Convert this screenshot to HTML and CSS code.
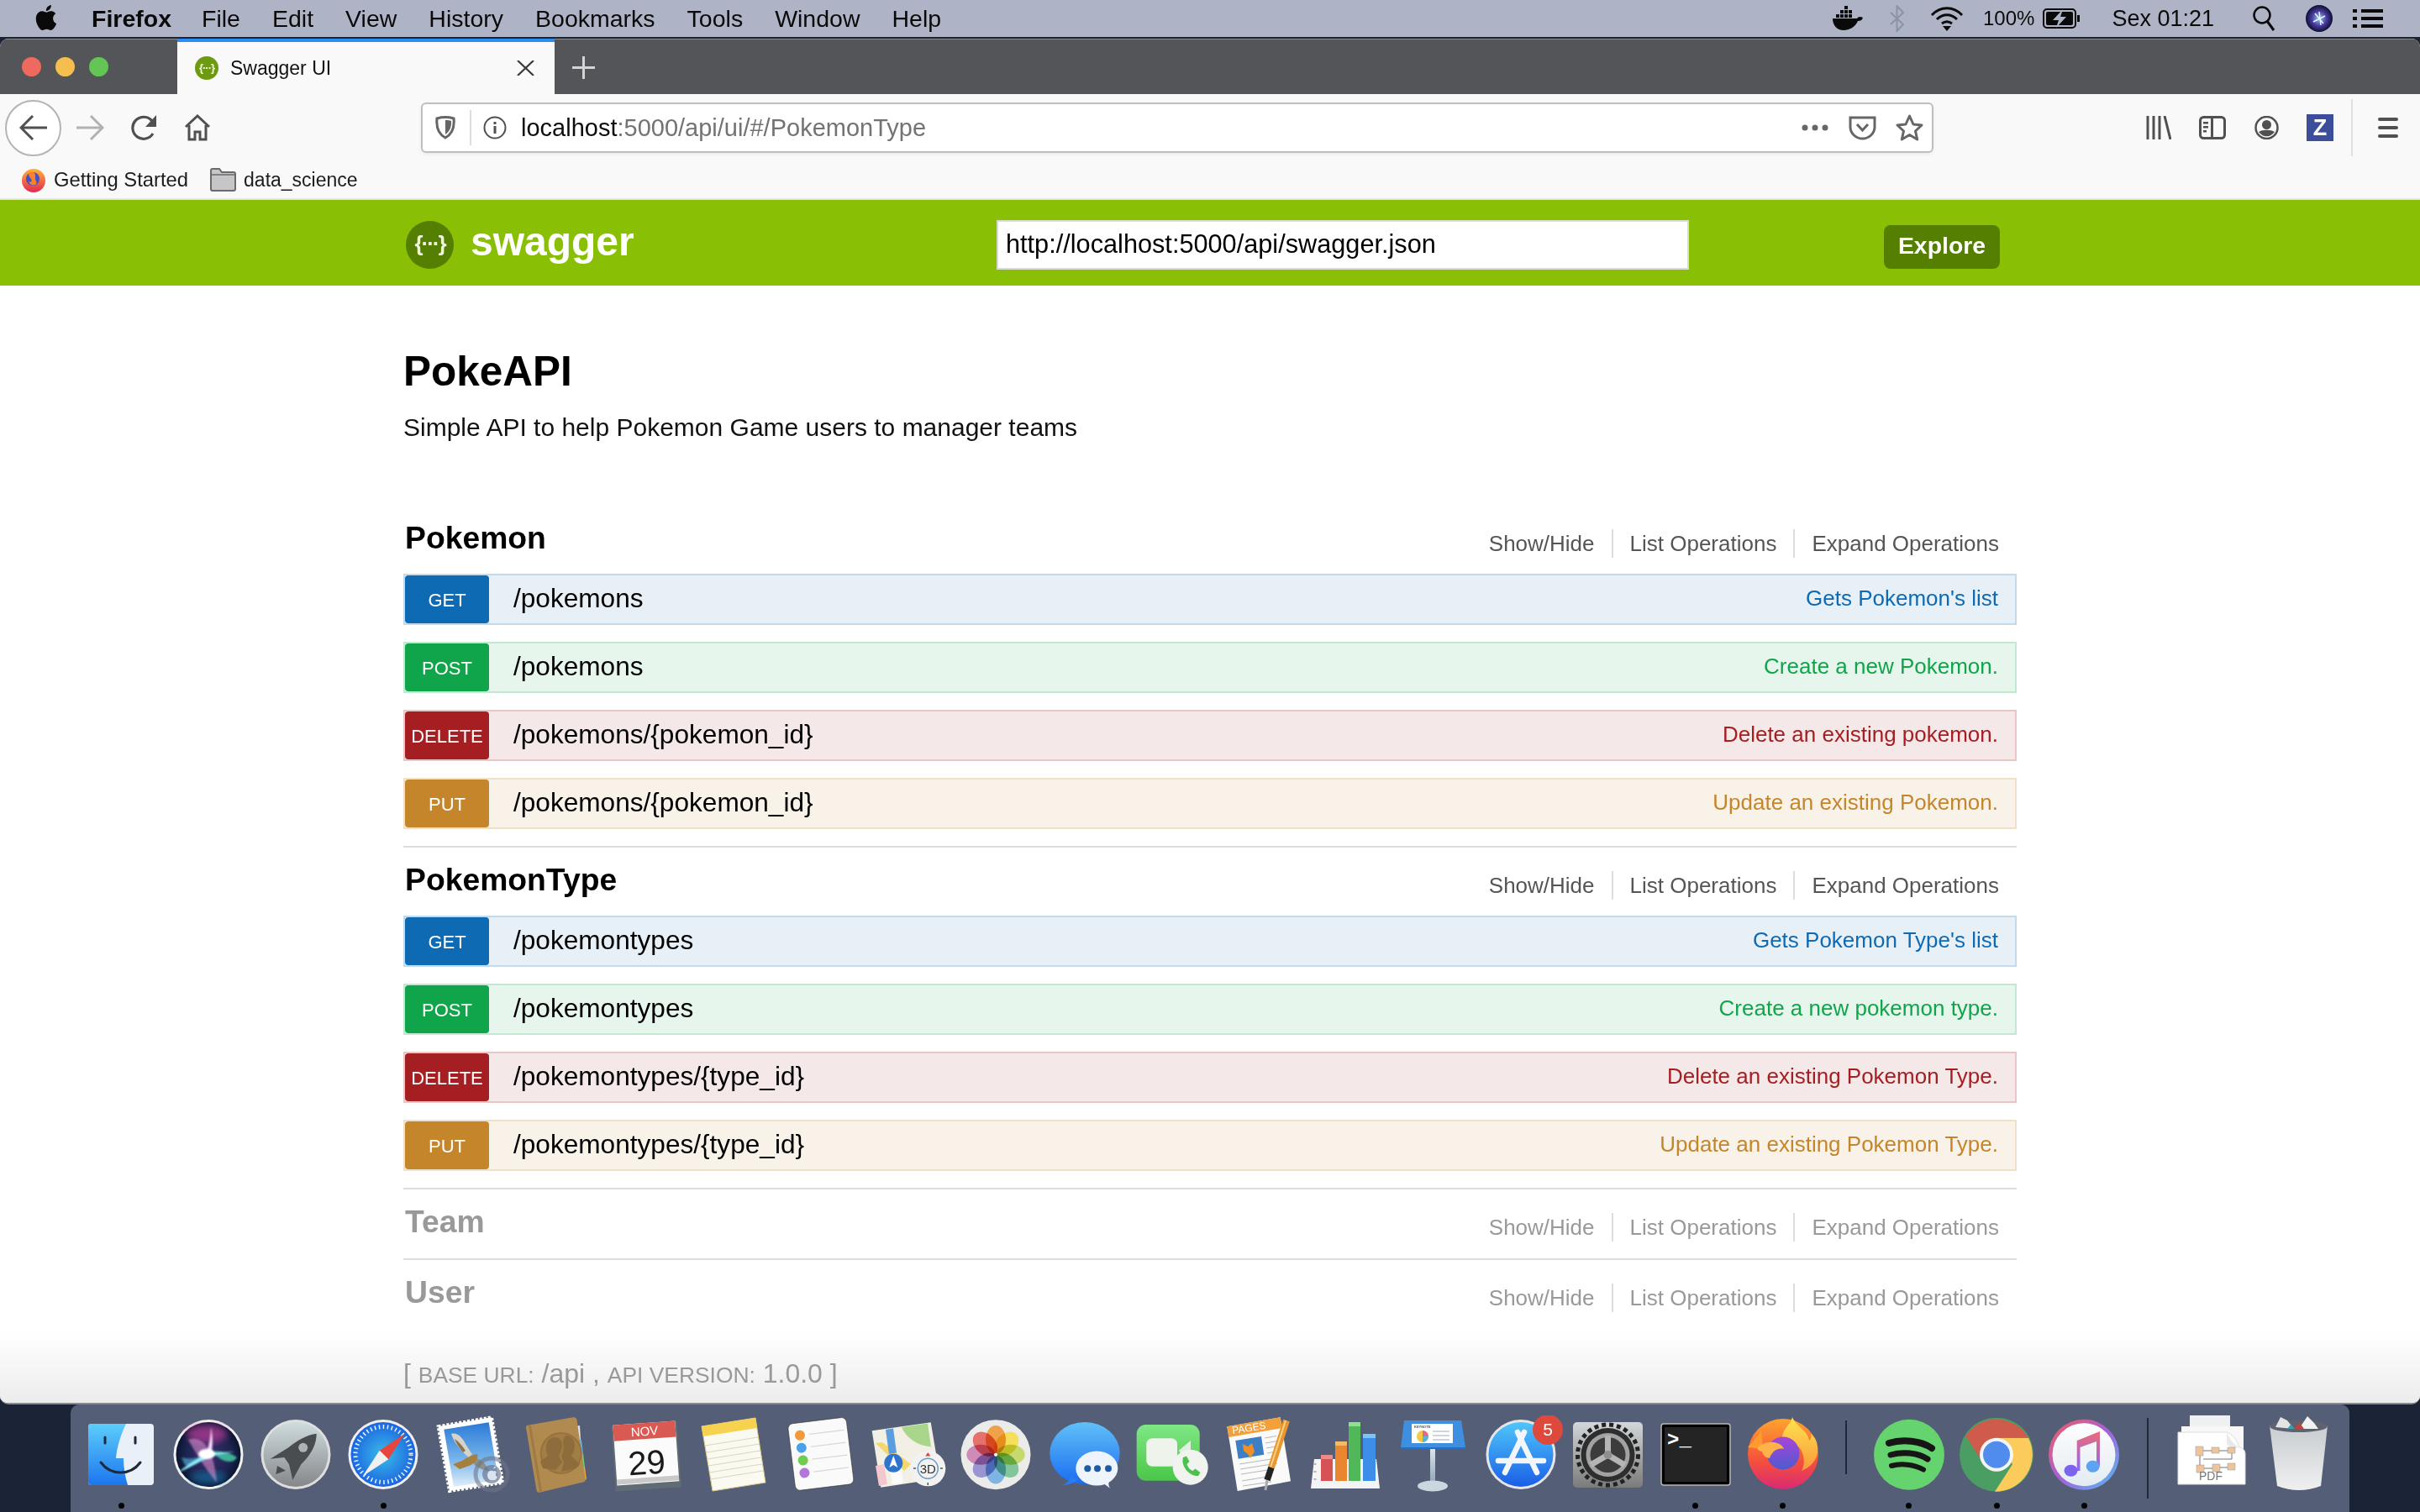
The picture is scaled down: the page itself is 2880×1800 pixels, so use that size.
FILE: index.html
```html
<!DOCTYPE html>
<html lang="en">
<head>
<meta charset="utf-8">
<title>Swagger UI</title>
<link rel="stylesheet" href="styles.css">
</head>
<body>
<header class="menubar">
  <svg class="apple" width="36" height="36" viewBox="0 0 24 24"><path fill="#0a0a0a" d="M18.71 19.5c-.83 1.24-1.71 2.45-3.05 2.47-1.34.03-1.77-.79-3.29-.79-1.53 0-2 .77-3.27.82-1.31.05-2.3-1.32-3.14-2.53C4.25 17 2.94 12.45 4.7 9.39c.87-1.52 2.43-2.48 4.12-2.51 1.28-.02 2.5.87 3.29.87.78 0 2.26-1.07 3.81-.91.65.03 2.47.26 3.64 1.98-.09.06-2.17 1.28-2.15 3.81.03 3.02 2.65 4.03 2.68 4.04-.03.07-.42 1.44-1.38 2.83M13 3.5c.73-.83 1.94-1.46 2.94-1.5.13 1.17-.34 2.35-1.04 3.19-.69.85-1.83 1.51-2.95 1.42-.15-1.15.41-2.35 1.05-3.11z"/></svg>
  <nav class="menus">
    <span class="menu-app">Firefox</span><span>File</span><span>Edit</span><span>View</span><span>History</span><span>Bookmarks</span><span>Tools</span><span>Window</span><span>Help</span>
  </nav>
  <div class="status">
    <svg width="36" height="30" viewBox="0 0 36 30"><path fill="#0a0a0a" d="M0 15h29c1-2 4-3 7-1-1 3-3 4-6 4-3 7-10 11-17 11C5 29 0 23 0 15z"/><path fill="#0a0a0a" d="M4 10h4v4H4zM9 10h4v4H9zM14 10h4v4h-4zM19 10h4v4h-4zM9 5h4v4H9zM14 5h4v4h-4zM19 5h4v4h-4zM14 0h4v4h-4z"/></svg>
    <svg class="ml32" width="17" height="32" viewBox="0 0 17 32"><path fill="none" stroke="#8b93a6" stroke-width="2" d="M1 9l15 14-7.500 8V1L16 9 1 23"/></svg>
    <svg class="ml31" width="40" height="30" viewBox="0 0 40 30"><g fill="none" stroke="#0a0a0a" stroke-width="3"><path d="M2 11C12 0 28 0 38 11"/><path d="M8 16c7-7 17-7 24 0"/><path d="M14 21c4-3 8-3 12 0"/></g><path fill="#0a0a0a" d="M15 24h10l-5 6z"/></svg>
    <span class="batt-text ml23">100%</span>
    <svg class="ml10" width="44" height="24" viewBox="0 0 44 24"><rect x="1" y="1" width="38" height="22" rx="4" fill="none" stroke="#0a0a0a" stroke-width="2"/><rect x="4" y="4" width="32" height="16" rx="2" fill="#0a0a0a"/><path fill="#aeb4c6" d="M24 1L12 14h7l-3 9 12-13h-7z"/><path fill="#0a0a0a" d="M41 8h3v8h-3z"/></svg>
    <span class="clock ml38">Sex 01:21</span>
    <svg class="ml46" width="27" height="30" viewBox="0 0 27 30"><circle cx="11" cy="11" r="9.500" fill="none" stroke="#0a0a0a" stroke-width="2.500"/><path stroke="#0a0a0a" stroke-width="3" d="M17 18l8 11"/></svg>
    <svg class="ml36" width="32" height="32" viewBox="0 0 32 32"><defs><radialGradient id="sm"><stop offset="0" stop-color="#8fd0ea"/><stop offset=".55" stop-color="#4a3aa0"/><stop offset="1" stop-color="#0a1030"/></radialGradient></defs><circle cx="16" cy="16" r="16" fill="url(#sm)"/><path stroke="#e8f2fa" stroke-width="1.500" d="M16 8l2 16M9 20l14-7M11 10l10 12"/></svg>
    <svg class="ml24" width="36" height="24" viewBox="0 0 36 24"><path fill="#0a0a0a" d="M0 1h5v4H0zM10 1h26v4H10zM0 10h5v4H0zM10 10h26v4H10zM0 19h5v4H0zM10 19h26v4H10z"/></svg>
  </div>
</header>

<div class="window">
  <div class="tabbar">
    <div class="lights"><i class="light red"></i><i class="light yellow"></i><i class="light green"></i></div>
    <div class="tab">
      <span class="favicon">{···}</span>
      <span class="tab-title">Swagger UI</span>
      <svg class="tab-close" width="21" height="18" viewBox="0 0 21 18"><path stroke="#3a3a3a" stroke-width="2.200" d="M1 0l19 18M20 0L1 18"/></svg>
    </div>
    <svg class="tab-new" width="27" height="27" viewBox="0 0 27 27"><path stroke="#d4d4d4" stroke-width="3" d="M13.500 0v27M0 13.500h27"/></svg>
  </div>

  <div class="toolbar">
    <div class="backbtn"><svg width="34" height="30" viewBox="0 0 34 30"><path fill="none" stroke="#505050" stroke-width="3" d="M33 15H3M16 1L2 15l14 14"/></svg></div>
    <div class="navbtn"><svg width="33" height="30" viewBox="0 0 33 30"><path fill="none" stroke="#b2b2b2" stroke-width="3" d="M0 15h31M17 1l14 14-14 14"/></svg></div>
    <div class="navbtn"><svg width="31" height="30" viewBox="0 0 31 30"><path fill="none" stroke="#505050" stroke-width="3.200" d="M26 22A13 13 0 1 1 24 6l4 4"/><path fill="#505050" d="M30 0v14H17z"/></svg></div>
    <div class="navbtn"><svg width="32" height="32" viewBox="0 0 32 32"><path fill="none" stroke="#505050" stroke-width="3" d="M2 15L16 2l14 13M6 13v17h7v-9h6v9h7V13"/></svg></div>
    <div class="urlbar">
      <svg width="24" height="28" viewBox="0 0 24 28"><path fill="none" stroke="#666" stroke-width="3" d="M2 3c7-2 13-2 20 0 1 10-1 18-10 23C3 21 1 13 2 3z"/><path fill="#666" d="M12 5c3 0 5 .3 7 1 .5 7-1.500 12-7 16z"/></svg>
      <i class="url-sep"></i>
      <svg class="url-info" width="28" height="28" viewBox="0 0 28 28"><circle cx="14" cy="14" r="12.500" fill="none" stroke="#505050" stroke-width="2"/><path fill="#505050" d="M12.500 12h3v9h-3zM12.500 7h3v3h-3z"/></svg>
      <span class="url-text"><b>localhost</b>:5000/api/ui/#/PokemonType</span>
      <svg class="url-dots" width="32" height="8" viewBox="0 0 32 8"><circle cx="4" cy="4" r="3.500" fill="#666"/><circle cx="16" cy="4" r="3.500" fill="#666"/><circle cx="28" cy="4" r="3.500" fill="#666"/></svg>
      <svg class="url-pocket" width="33" height="29" viewBox="0 0 33 29"><path fill="none" stroke="#666" stroke-width="3" d="M2 2h29v11c0 8-7 14-14.500 14S2 21 2 13z"/><path fill="none" stroke="#666" stroke-width="3" d="M10 10l6.500 7L23 10"/></svg>
      <svg class="url-star" width="33" height="32" viewBox="0 0 33 32"><path fill="none" stroke="#666" stroke-width="3" stroke-linejoin="round" d="M16.500 2l4.500 10 10 1-7.500 7 2.200 10-9.200-5.500L7.300 30l2.200-10L2 13l10-1z"/></svg>
    </div>
    <div class="navbtn tools-first"><svg width="30" height="28" viewBox="0 0 30 28"><path stroke="#505050" stroke-width="3" fill="none" d="M2 0v28M9 0v28M16 0v28M22 0l7 28"/></svg></div>
    <div class="navbtn"><svg width="32" height="28" viewBox="0 0 32 28"><rect x="1.500" y="1.500" width="29" height="25" rx="4" fill="none" stroke="#505050" stroke-width="3"/><path fill="#505050" d="M14 2h3v24h-3zM5 7h6v2.500H5zM5 12h6v2.500H5zM5 17h4v2.500H5z"/></svg></div>
    <div class="navbtn"><svg width="29" height="28" viewBox="0 0 29 28"><circle cx="14.500" cy="14" r="13" fill="none" stroke="#505050" stroke-width="2.500"/><circle cx="14.500" cy="10.500" r="5.500" fill="#505050"/><path fill="#505050" d="M5 19c5-3 14-3 19 0-5 7-14 7-19 0z"/></svg></div>
    <div class="navbtn"><span class="zbox">Z</span></div>
    <i class="tool-sep"></i>
    <div class="navbtn tool-menu"><svg width="24" height="24" viewBox="0 0 24 24"><path stroke="#505050" stroke-width="4" stroke-linecap="round" d="M2 2h20M2 12h20M2 22h20"/></svg></div>
  </div>

  <div class="bookmarks">
    <svg width="30" height="30" viewBox="0 0 30 30"><defs><linearGradient id="fxs" x1="0" y1="0" x2="0" y2="1"><stop offset="0" stop-color="#ffb23a"/><stop offset="1" stop-color="#e22850"/></linearGradient></defs><circle cx="15" cy="16" r="14" fill="url(#fxs)"/><circle cx="14" cy="14" r="8" fill="#4a4fc0"/><path fill="#f8832b" d="M9 7c5-3 9 0 8 5-1 4 3 5 1 8-3 3-8 1-9-3 2 2 5 0 3-3-2-2-3-4-3-7z"/></svg>
    <span class="bm-label">Getting Started</span>
    <svg class="bm-folder" width="31" height="28" viewBox="0 0 31 28"><path fill="#c6c6c8" stroke="#6a6a6a" stroke-width="2" d="M1 3a2 2 0 0 1 2-2h8l3 4h14a2 2 0 0 1 2 2v18a2 2 0 0 1-2 2H3a2 2 0 0 1-2-2z"/><path stroke="#6a6a6a" stroke-width="1.500" d="M1 8h29"/></svg>
    <span class="bm-label bm-narrow">data_science</span>
  </div>

  <div class="swagger-bar">
    <div class="swagger-inner">
      <div class="logo"><span class="logo-mark">{···}</span><span class="logo-word">swagger</span></div>
      <div class="api-input">http://localhost:5000/api/swagger.json</div>
      <div class="explore">Explore</div>
    </div>
  </div>

  <main class="page">
    <div class="content">
      <h1 class="title">PokeAPI</h1>
      <p class="subtitle">Simple API to help Pokemon Game users to manager teams</p>

      <section class="resource open">
        <div class="res-head"><h2>Pokemon</h2><div class="res-actions"><span>Show/Hide</span><span>List Operations</span><span>Expand Operations</span></div></div>
        <div class="ops">
          <div class="op get"><span class="verb">GET</span><span class="path">/pokemons</span><span class="desc">Gets Pokemon's list</span></div>
          <div class="op post"><span class="verb">POST</span><span class="path">/pokemons</span><span class="desc">Create a new Pokemon.</span></div>
          <div class="op delete"><span class="verb">DELETE</span><span class="path">/pokemons/{pokemon_id}</span><span class="desc">Delete an existing pokemon.</span></div>
          <div class="op put"><span class="verb">PUT</span><span class="path">/pokemons/{pokemon_id}</span><span class="desc">Update an existing Pokemon.</span></div>
        </div>
      </section>

      <section class="resource open">
        <div class="res-head"><h2>PokemonType</h2><div class="res-actions"><span>Show/Hide</span><span>List Operations</span><span>Expand Operations</span></div></div>
        <div class="ops">
          <div class="op get"><span class="verb">GET</span><span class="path">/pokemontypes</span><span class="desc">Gets Pokemon Type's list</span></div>
          <div class="op post"><span class="verb">POST</span><span class="path">/pokemontypes</span><span class="desc">Create a new pokemon type.</span></div>
          <div class="op delete"><span class="verb">DELETE</span><span class="path">/pokemontypes/{type_id}</span><span class="desc">Delete an existing Pokemon Type.</span></div>
          <div class="op put"><span class="verb">PUT</span><span class="path">/pokemontypes/{type_id}</span><span class="desc">Update an existing Pokemon Type.</span></div>
        </div>
      </section>

      <section class="resource closed ruled">
        <div class="res-head"><h2>Team</h2><div class="res-actions"><span>Show/Hide</span><span>List Operations</span><span>Expand Operations</span></div></div>
      </section>
      <section class="resource closed">
        <div class="res-head"><h2>User</h2><div class="res-actions"><span>Show/Hide</span><span>List Operations</span><span>Expand Operations</span></div></div>
      </section>

      <p class="api-footer">[ <small>BASE URL:</small> /api , <small>API VERSION:</small> 1.0.0 ]</p>
    </div>
  </main>
</div>

<footer class="dockrow">
  <div class="dock">
    <div class="dock-item"><svg width="104" height="104" viewBox="0 0 104 104"><defs><linearGradient id="fi" x1="0" y1="0" x2="0" y2="1"><stop offset="0" stop-color="#5dcdfb"/><stop offset="1" stop-color="#1c76ee"/></linearGradient></defs><rect x="13" y="10" width="78" height="73" rx="4" fill="#eaf0f7"/><path fill="url(#fi)" d="M17 10h41c-6 12-11 28-12 41h9c0 12 2 22 5 32H17a4 4 0 0 1-4-4V14a4 4 0 0 1 4-4z"/><path stroke="#1d2a3a" stroke-width="3" stroke-linecap="round" d="M33 26v7M69 26v7"/><path fill="none" stroke="#1d2a3a" stroke-width="3" stroke-linecap="round" d="M28 56c12 16 35 16 47 0"/></svg><i class="dot"></i></div>
    <div class="dock-item"><svg width="104" height="104" viewBox="0 0 104 104"><defs><radialGradient id="si"><stop offset="0" stop-color="#3b2f6e"/><stop offset=".7" stop-color="#1c2450"/><stop offset="1" stop-color="#0b1530"/></radialGradient><filter id="blur4"><feGaussianBlur stdDeviation="4"/></filter><filter id="blur1"><feGaussianBlur stdDeviation="1"/></filter></defs><circle cx="52" cy="46.500" r="41.500" fill="#f1f1f1"/><circle cx="52" cy="46.500" r="38.500" fill="url(#si)"/><ellipse cx="50" cy="22" rx="24" ry="11" fill="#b43a96" opacity=".75" filter="url(#blur4)"/><ellipse cx="52" cy="74" rx="22" ry="8" fill="#176a9c" opacity=".7" filter="url(#blur4)"/><g filter="url(#blur1)"><path fill="#d98acb" opacity=".6" d="M28 29c14-5 30 5 34 51-10-12-22-30-34-51z"/><path fill="#45c7a6" opacity=".85" d="M56 43c10-1 22 1 30 7-6 10-20 4-30-7z"/><path fill="#49a7cf" opacity=".7" d="M20 50c10 3 20 1 28-4-4 8-14 14-24 13z"/><path fill="#8ff0fa" d="M16 68c14-12 28-20 38-23l30-2-28 5c-12 6-26 14-40 20z"/><path fill="#f4d9f4" d="M55 14c0 10-2 22-6 32l6 2c3-12 2-24 0-34z"/></g><ellipse cx="50" cy="46" rx="10" ry="6" fill="#fff" filter="url(#blur1)"/></svg></div>
    <div class="dock-item"><svg width="104" height="104" viewBox="0 0 104 104"><defs><linearGradient id="la" x1="0" y1="0" x2="0" y2="1"><stop offset="0" stop-color="#cfdcdf"/><stop offset="1" stop-color="#85878a"/></linearGradient></defs><circle cx="52" cy="46.500" r="41.500" fill="#dedede"/><circle cx="52" cy="46.500" r="38.500" fill="url(#la)"/><path fill="#4a4d50" d="M76.700 21.700C65 23.300 53.300 30 43.300 38.300L21.700 51.700 38.300 50 44 58.300l4.300 18.400 10-18.400C71.700 45 76.700 33.300 76.700 21.700z"/><path fill="#4a4d50" d="M30 60l-1.700 10L40 65.700z"/><circle cx="60.700" cy="38.300" r="5.500" fill="#adb3b5"/></svg></div>
    <div class="dock-item"><svg width="104" height="104" viewBox="0 0 104 104"><defs><radialGradient id="sa"><stop offset="0" stop-color="#3cbce8"/><stop offset="1" stop-color="#1b66e0"/></radialGradient></defs><circle cx="52" cy="46.500" r="41.500" fill="#f0f0f0"/><circle cx="52" cy="46.500" r="38.500" fill="url(#sa)"/><circle cx="52" cy="46.500" r="33" fill="none" stroke="#e6f3fd" stroke-width="5" stroke-dasharray="1.500 3.500"/><path fill="#e9453f" d="M77.700 21.700L47.700 41.700l10.600 10.600z"/><path fill="#f1f1f1" d="M27.700 72.300l20-30.600 10.600 10.600z"/></svg><i class="dot"></i></div>
    <div class="dock-item"><svg width="104" height="104" viewBox="0 0 104 104"><defs><linearGradient id="ma" x1="0" y1="0" x2="0" y2="1"><stop offset="0" stop-color="#2b7ad6"/><stop offset=".55" stop-color="#74b2ea"/><stop offset="1" stop-color="#e0eef9"/></linearGradient></defs><path fill="#fff" stroke="#fff" stroke-width="4" stroke-dasharray="3 2" d="M13.700 13.300L77 2.300 90.300 80 27 90z"/><path fill="#fff" d="M15.700 14.300L75.500 4.300 88.300 78 28.500 88z"/><path fill="url(#ma)" d="M20.300 16.700L73.700 8.300 85.300 76.700 32 85z"/><path fill="#d8d3c6" d="M50 50C42 44 32 32 29 22c7-2 13 4 17 12 4 6 6 10 8 12z"/><path fill="#8d7450" d="M33 28c4 2 9 8 13 14l-3 2c-4-5-8-10-10-16z"/><path fill="#8f8f88" d="M56 52c6-2 12 2 18 14-6 0-14-4-18-8z"/><path fill="#a57f3e" d="M60 46c-4 0-12 4-18 8-6 2-10 4-11 4l8 6 11-4c6-2 12-8 10-14z"/><circle cx="77" cy="70" r="19" fill="none" stroke="#6c7488" stroke-width="5" opacity=".6"/><circle cx="77" cy="70" r="11" fill="#667088" opacity=".65"/><path fill="#dbe3ee" d="M79 63c1-2 3-2.500 3-2.500 0 2-1 3.500-3 2.500zm4 5c-2 1-1 5 1 5-1 3-3 5-6 4-3 1-6-2-6-6s3-6 6-5c2 1 3-1 5 2z"/></svg></div>
    <div class="dock-item"><svg width="104" height="104" viewBox="0 0 104 104"><path fill="#dfe3e6" d="M72 13l6-1 1 17-5 1z"/><path fill="#64b4e4" d="M74 30l6-1 2 17-6 1z"/><path fill="#6fce7b" d="M76 46l6-1 2 17-6 1z"/><path fill="#eda838" d="M78 62l6-1 2 15-6 2z"/><path fill="#b18a4f" d="M16 11.700L70 2.300q4-.5 4.500 3L84.700 76q.3 3-3 3.500L30 91.700q-3 .5-3.500-2.500L14 14.500q-.3-2.500 2-2.800z"/><path fill="#9f7a44" d="M17 12l3 0 13 78-3 1z"/><circle cx="55.700" cy="45" r="24" fill="#a37d46" stroke="#96723e" stroke-width="2"/><path fill="#8f6c3b" d="M47 26c7-1 11 5 10 12-1 5-3 8-4 10l4 8-8 9-15-2-3-8 9-7c-2-4-2-7-2-10 0-6 3-11 9-12zM62 24c6 0 10 5 10 12 0 5-2 9-4 12l10 10-4 5-18 4 3-11-3-8c3-5 3-11 2-15 0-4 1-8 4-9z"/></svg></div>
    <div class="dock-item"><svg width="104" height="104" viewBox="0 0 104 104"><g transform="rotate(-4 52 47)"><rect x="13" y="10" width="78" height="78" fill="#5f6c73"/><rect x="15" y="9" width="74" height="72" fill="#fbfbfb"/><rect x="15" y="9" width="74" height="19" fill="#d95a52"/><rect x="15" y="74" width="74" height="6" fill="#c9c9c9"/><text class="dk-nov" x="52" y="24">NOV</text><text class="dk-day" x="52" y="70">29</text></g></svg></div>
    <div class="dock-item"><svg width="104" height="104" viewBox="0 0 104 104"><path fill="#fbfaf0" stroke="#d9c988" d="M14 13L78 3l12 77-63 10z"/><path fill="#f7d24e" d="M14 13L78 3l2 12-64 10z"/><g stroke="#d9d6c2" stroke-width="1.200"><path d="M18 36l63-10M20 44l63-10M21 52l63-10M22 60l63-10M23 68l63-10M24 76l63-10"/></g></svg></div>
    <div class="dock-item"><svg width="104" height="104" viewBox="0 0 104 104"><g transform="translate(3 0) rotate(-7 48 47)"><rect x="14" y="6" width="70" height="80" rx="6" fill="#fafafa" stroke="#333" stroke-width=".6"/><circle cx="27" cy="21" r="6" fill="#f2993a"/><circle cx="27" cy="36" r="6" fill="#4aa1ea"/><circle cx="27" cy="51" r="6" fill="#6fce4f"/><circle cx="27" cy="66" r="6" fill="#b376d9"/><path stroke="#d8d8d8" stroke-width="1.200" d="M38 21h42M38 36h42M38 51h42M38 66h42"/></g></svg></div>
    <div class="dock-item"><svg width="104" height="104" viewBox="0 0 104 104"><path fill="#f2efe4" d="M8.700 18.300L78.700 8.300 90 75 19.300 85.700z"/><path fill="#a9d68a" d="M44 14l31-4.500 4 28C62 36 50 27 44 14z"/><path fill="#f6d76b" d="M13 33l8-1 34 26-8 8z"/><path fill="#5b9ee0" d="M25 17l9-1.500 4 29-9 1.500z"/><path fill="#f4c7cf" d="M13 60l10-2 4 24-10 2z"/><path fill="#fbfbfb" d="M30 62l13-2 3 20-13 2z"/><circle cx="34.300" cy="56.700" r="11" fill="#2c74d0"/><path fill="#fff" d="M34.300 48l5 14-5-3-5 3z"/><circle cx="75.300" cy="63.300" r="21" fill="#f2f2f2"/><circle cx="75.300" cy="63.300" r="12" fill="none" stroke="#6a9cc4" stroke-width="1.500"/><path fill="#d24b3e" d="M75.300 44l3 4.500h-6z"/><path stroke="#555" stroke-width="1.500" d="M58 63h3M90 63h3M75.300 80v3"/><text class="dk-3d" x="75.300" y="68.500">3D</text></svg></div>
    <div class="dock-item"><svg width="104" height="104" viewBox="0 0 104 104"><circle cx="52" cy="46.700" r="41.500" fill="#ebebe9"/><g class="petals"><ellipse cx="52" cy="29" rx="12" ry="17" fill="#efa24a"/><ellipse cx="52" cy="29" rx="12" ry="17" fill="#f6df5a" transform="rotate(45 52 46.700)"/><ellipse cx="52" cy="29" rx="12" ry="17" fill="#c6d96c" transform="rotate(90 52 46.700)"/><ellipse cx="52" cy="29" rx="12" ry="17" fill="#83c59b" transform="rotate(135 52 46.700)"/><ellipse cx="52" cy="29" rx="12" ry="17" fill="#7eb4e2" transform="rotate(180 52 46.700)"/><ellipse cx="52" cy="29" rx="12" ry="17" fill="#9a94d0" transform="rotate(225 52 46.700)"/><ellipse cx="52" cy="29" rx="12" ry="17" fill="#cf8bb8" transform="rotate(270 52 46.700)"/><ellipse cx="52" cy="29" rx="12" ry="17" fill="#e5716a" transform="rotate(315 52 46.700)"/></g><circle cx="52" cy="46.700" r="2" fill="#fff"/></svg></div>
    <div class="dock-item"><svg width="104" height="104" viewBox="0 0 104 104"><defs><linearGradient id="ms" x1="0" y1="0" x2="0" y2="1"><stop offset="0" stop-color="#62c0f8"/><stop offset="1" stop-color="#1a6cf0"/></linearGradient></defs><ellipse cx="54" cy="45" rx="41.700" ry="37" fill="url(#ms)"/><path fill="#2b7cf0" d="M36 72c0 5-3 9-9 11 7 0 14-2 19-7z"/><ellipse cx="68.300" cy="63" rx="25" ry="20.500" fill="#edf4fb"/><path fill="#edf4fb" d="M75 80l9 6.700c-2-3-2-6-1-9z"/><circle cx="57.300" cy="63.300" r="4" fill="#1f5aa8"/><circle cx="69" cy="63.300" r="4" fill="#1f5aa8"/><circle cx="82" cy="63.300" r="4" fill="#1f5aa8"/></svg></div>
    <div class="dock-item"><svg width="104" height="104" viewBox="0 0 104 104"><defs><linearGradient id="ft" x1="0" y1="0" x2="0" y2="1"><stop offset="0" stop-color="#7ee884"/><stop offset="1" stop-color="#4bc649"/></linearGradient></defs><rect x="11.700" y="11" width="75" height="66.700" rx="11" fill="url(#ft)"/><rect x="23.300" y="27.300" width="36.700" height="33.400" rx="7" fill="#eef3ec"/><path fill="#e3eee1" d="M61.700 42L76 30v28z"/><circle cx="75.700" cy="61.700" r="21" fill="#f1f3ef"/><path fill="#4fc04f" d="M67 50l4-1.500 3.500 6.500-3 3c1 4 4 7 7 8l3-2.500 6 4.500-2.500 4C75 73 64 61 67 50z"/></svg></div>
    <div class="dock-item"><svg width="104" height="104" viewBox="0 0 104 104"><path fill="#fafafa" d="M15.300 13.300L78.700 2.300 91 78.300 27.700 90z"/><path fill="#f2a03c" d="M15.300 13.300L78.700 2.300 81 15 17.500 26z"/><text class="dk-pages" transform="rotate(-9 22 22)" x="22" y="22">PAGES</text><path fill="#3c7fc4" d="M25.300 30L56 25l3.300 21.700-30.600 5z"/><path fill="#ee8f2a" d="M34 34l6 3 5-4 3 10-5 8-3-5-5-4z"/><g stroke="#b8b8b8" stroke-width="1"><path d="M60 27l14-2.500M61 33l14-2.500M62 39l14-2.500M63 45l13-2.500M30 58l44-7M31 64l44-7M32 70l38-6M33 78l36-6M34 84l34-5"/></g><path stroke="#e9962f" stroke-width="8" d="M86 6L68 62"/><path stroke="#f7d388" stroke-width="2" d="M85 6L67 62"/><path stroke="#222" stroke-width="7.500" d="M68 62l-5 15"/><path stroke="#aaa" stroke-width="3" d="M63 77l-2 12"/></svg></div>
    <div class="dock-item"><svg width="104" height="104" viewBox="0 0 104 104"><path fill="#f4f4f4" d="M15 52h74l4 35H11z"/><rect x="23" y="47" width="14" height="31" fill="#d65254"/><rect x="23" y="47" width="14" height="5" fill="#ee8a8a"/><rect x="40" y="31" width="14" height="47" fill="#e9862f"/><rect x="40" y="31" width="14" height="5" fill="#f6b866"/><rect x="56" y="8" width="14" height="70" fill="#51b85a"/><rect x="56" y="8" width="14" height="5" fill="#8ee08e"/><rect x="73" y="22" width="15" height="56" fill="#3d8ee8"/><rect x="73" y="22" width="15" height="5" fill="#7cc3f6"/><path stroke="#b5b5b5" stroke-width="3" stroke-dasharray="2 7" d="M16 57v24"/></svg></div>
    <div class="dock-item"><svg width="104" height="104" viewBox="0 0 104 104"><defs><linearGradient id="kn" x1="0" y1="0" x2="0" y2="1"><stop offset="0" stop-color="#dfe7ec"/><stop offset="1" stop-color="#8fa3b4"/></linearGradient></defs><rect x="49" y="38" width="6" height="44" fill="url(#kn)"/><ellipse cx="52" cy="84" rx="18" ry="6.500" fill="#cbd7e0"/><path fill="#3e8fe0" d="M18 6h68l5 32H14z"/><path fill="#2a6dbd" d="M14 38h77v2H14z"/><path fill="#fff" d="M27 10h49v23H27z"/><text class="dk-key" x="30" y="15">KEYNOTE</text><circle cx="40" cy="25" r="7" fill="#f5c945"/><path fill="#e06a8a" d="M40 25v-7a7 7 0 0 1 7 7z"/><path fill="#4fb7e0" d="M40 25h7a7 7 0 0 1-7 7z"/><path stroke="#9ab" stroke-width="1.200" d="M52 19h20M52 24h20M52 29h20"/></svg></div>
    <div class="dock-item"><svg width="104" height="104" viewBox="0 0 104 104"><defs><linearGradient id="ap" x1="0" y1="0" x2="0" y2="1"><stop offset="0" stop-color="#4fc6fb"/><stop offset="1" stop-color="#1a5ee6"/></linearGradient></defs><circle cx="52" cy="46.500" r="41.500" fill="#e6e6e6"/><circle cx="52" cy="46.500" r="38.500" fill="url(#ap)"/><g stroke="#f2f6fa" stroke-width="6.500" stroke-linecap="round"><path d="M56 20L33 68"/><path d="M48 20l23 48"/><path d="M25 54h54"/></g><circle cx="84" cy="17" r="18" fill="#dd4a3c"/><text class="dk-badge" x="84" y="24">5</text></svg></div>
    <div class="dock-item"><svg width="104" height="104" viewBox="0 0 104 104"><defs><linearGradient id="sp" x1="0" y1="0" x2="0" y2="1"><stop offset="0" stop-color="#d3d7d9"/><stop offset="1" stop-color="#7b7b7b"/></linearGradient></defs><rect x="10" y="8" width="83" height="78" rx="5" fill="url(#sp)"/><circle cx="51.500" cy="47" r="36" fill="none" stroke="#222" stroke-width="5" stroke-dasharray="5 4"/><circle cx="51.500" cy="47" r="32" fill="#2e2e2e"/><circle cx="51.500" cy="47" r="26" fill="#a2a2a2"/><circle cx="51.500" cy="47" r="21" fill="#3c3c3c"/><g stroke="#b5b5b5" stroke-width="7"><path d="M51.500 47V24M51.500 47L31 59M51.500 47l20 12"/></g><circle cx="51.500" cy="47" r="5" fill="#8f8f8f"/></svg></div>
    <div class="dock-item"><svg width="104" height="104" viewBox="0 0 104 104"><rect x="11" y="10" width="82" height="73" rx="3" fill="#000" stroke="#b8b8b8" stroke-width="1.500"/><rect x="15" y="14" width="74" height="65" fill="#242424"/><text class="dk-term" x="18" y="36">&gt;_</text></svg><i class="dot"></i></div>
    <div class="dock-item"><svg width="104" height="104" viewBox="0 0 104 104"><defs><linearGradient id="fx" x1="0" y1="0" x2="0" y2="1"><stop offset="0" stop-color="#ffa32e"/><stop offset=".6" stop-color="#f5503c"/><stop offset="1" stop-color="#d92a75"/></linearGradient><linearGradient id="fy" x1="0" y1="0" x2="0" y2="1"><stop offset="0" stop-color="#ffe44f"/><stop offset="1" stop-color="#f9983a"/></linearGradient><linearGradient id="fp" x1="0" y1="0" x2="0" y2="1"><stop offset="0" stop-color="#a844d8"/><stop offset="1" stop-color="#4d5bd0"/></linearGradient></defs><circle cx="52" cy="46" r="42" fill="url(#fx)"/><path fill="#ff9a30" d="M26 16c-1 6-7 11-16 22l18 2z"/><path fill="url(#fy)" d="M63 2c-2 10-13 14-12 28l20 8c6 6 8 20 3 28 10-4 18-12 19-22 1-10-2-18-8-22 1 4 0 6-2 8C82 18 68 14 63 2z"/><circle cx="52" cy="45" r="19.500" fill="url(#fp)"/><path fill="#fdb347" d="M21 39c6-6 16-9 24-6 4 1 7 4 8 7-4-1-8 0-11 2-3 3-5 5-6 9-6-1-8-4-9-8-2 0-4-1-6-4z"/></svg><i class="dot"></i></div>
    <i class="dock-sep short"></i>
    <div class="dock-item"><svg width="104" height="104" viewBox="0 0 104 104"><circle cx="52" cy="46.700" r="42" fill="#65d46e"/><g fill="none" stroke="#161616" stroke-linecap="round"><path stroke-width="8" d="M28 33c16-5 38-3 51 6"/><path stroke-width="7" d="M30 47c14-4 32-3 44 5"/><path stroke-width="6" d="M31 60c11-3 27-2 38 4.500"/></g></svg><i class="dot"></i></div>
    <div class="dock-item"><svg width="104" height="104" viewBox="0 0 104 104"><circle cx="52" cy="46.700" r="44" fill="#4b9e63"/><path fill="#fbcb5b" d="M90 26.700A44 44 0 0 1 50 90.700L71 58.300 52 26.700z"/><path fill="#cf5b4c" d="M15.300 24.300A44 44 0 0 1 90 26.700H52L32.700 51.700z"/><circle cx="52" cy="46.700" r="20" fill="#f4f4f4"/><circle cx="52" cy="46.700" r="16" fill="#4f8cec"/></svg><i class="dot"></i></div>
    <div class="dock-item"><svg width="104" height="104" viewBox="0 0 104 104"><defs><linearGradient id="it" x1="0" y1="0" x2="1" y2="1"><stop offset="0" stop-color="#f2605a"/><stop offset=".5" stop-color="#a65fd8"/><stop offset="1" stop-color="#4cc4f5"/></linearGradient><linearGradient id="iw" x1="0" y1="0" x2="0" y2="1"><stop offset="0" stop-color="#fdfdfd"/><stop offset="1" stop-color="#e3ecf2"/></linearGradient><linearGradient id="nt" x1="0" y1="0" x2="0" y2="1"><stop offset="0" stop-color="#ee6a78"/><stop offset="1" stop-color="#8a6bf0"/></linearGradient></defs><circle cx="52" cy="46.700" r="42" fill="url(#it)"/><circle cx="52" cy="46.700" r="37.500" fill="url(#iw)"/><path fill="url(#nt)" d="M43.700 30L71 19v41h-4V31l-19.500 7v28h-3.800z"/><ellipse cx="36.500" cy="65.700" rx="8" ry="7" fill="#7c64ec"/><ellipse cx="62.700" cy="60.700" rx="8" ry="7" fill="#5aa4f2"/></svg><i class="dot"></i></div>
    <i class="dock-sep tall"></i>
    <div class="dock-item"><svg width="104" height="104" viewBox="0 0 104 104"><path fill="#eef0f2" d="M26 0h48v22H26z"/><path fill="#f8f8f8" d="M16 13h74v30H16z"/><path fill="#fff" stroke="#dcdcdc" d="M12 20h58c6 2 12 8 15 18 4 1 7 3 7 8v36H12z"/><path fill="#e9e9e9" d="M70 20c3 8 8 14 15 18-7 2-12 0-15-4z"/><g fill="#efc39b" stroke="#999" stroke-width=".5"><rect x="33" y="37" width="9" height="11"/><rect x="52" y="38" width="9" height="7"/><rect x="71" y="38" width="9" height="7"/><rect x="34" y="59" width="9" height="9"/><rect x="53" y="58" width="9" height="9"/><rect x="71" y="57" width="9" height="8"/></g><path fill="none" stroke="#777" d="M42 42h10M61 42h10M43 63h10M62 62h9M38 48v11M76 45v7H42"/><text class="dk-pdf" x="51" y="77">PDF</text></svg></div>
    <div class="dock-item"><svg width="104" height="104" viewBox="0 0 104 104"><defs><linearGradient id="tr" x1="0" y1="0" x2="0" y2="1"><stop offset="0" stop-color="#c8ccd0"/><stop offset="1" stop-color="#f0f0f0"/></linearGradient></defs><path fill="url(#tr)" d="M17 12h69l-8 72q-26 10-52 0z"/><ellipse cx="51.500" cy="13" rx="34.500" ry="7" fill="#5d6370"/><path fill="#e4e4e4" d="M24 14l6-12 8 4 8 10z"/><path fill="#f2f2f2" d="M52 16l10-15 8 8 5 7z"/><path fill="#b8463c" d="M46 16l6-8 6 8z"/><path fill="#35a0b0" d="M38 16l4-5 5 5z"/></svg></div>
  </div>
</footer>
</body>
</html>
```

FILE: styles.css
```css
* { box-sizing: border-box; }
html, body { margin: 0; padding: 0; }
body {
  width: 2880px;
  height: 1800px;
  overflow: hidden;
  display: flex;
  flex-direction: column;
  background: #1a2436;
  font-family: "Liberation Sans", Arial, sans-serif;
  color: #000;
}
h1, h2, p { margin: 0; }
svg { display: block; flex: none; }
i { display: block; }

/* macOS menu bar */
.menubar {
  height: 44px;
  flex: none;
  display: flex;
  align-items: center;
  background: #aeb4c6;
  color: #0a0a0a;
  font-size: 28.500px;
}
.apple { margin-left: 37px; margin-top: -3px; }
.menus { display: flex; gap: 38px; margin-left: 36px; }
.menu-app { font-weight: 700; margin-right: -2px; }
.status { display: flex; align-items: center; margin-left: auto; margin-right: 44px; }
.batt-text { font-size: 24px; }
.clock { font-size: 27px; }
.ml10 { margin-left: 10px; }
.ml23 { margin-left: 23px; }
.ml24 { margin-left: 24px; }
.ml31 { margin-left: 31px; }
.ml32 { margin-left: 32px; }
.ml36 { margin-left: 36px; }
.ml38 { margin-left: 38px; }
.ml46 { margin-left: 46px; }

/* browser window */
.window {
  flex: none;
  height: 1626px;
  margin-top: 2px;
  display: flex;
  flex-direction: column;
  background: #fff;
  border-radius: 10px;
  border-bottom: 2px solid #8a8a8a;
  overflow: hidden;
}
.tabbar {
  flex: none;
  height: 66px;
  display: flex;
  background: #545558;
  border-top: 1px solid #8d8d8f;
  align-items: stretch;
}
.lights { width: 211px; display: flex; align-items: center; gap: 17px; padding-left: 26px; }
.light { width: 23px; height: 23px; border-radius: 50%; }
.light.red { background: #ee6a5f; }
.light.yellow { background: #f5bf4f; }
.light.green { background: #62c554; }
.tab {
  width: 449px;
  display: flex;
  align-items: center;
  margin-top: -1px;
  padding-left: 21px;
  background: #f9f9f9;
  border-top: 4px solid #2b8cf4;
}
.favicon {
  width: 28px;
  height: 28px;
  border-radius: 50%;
  background: #6c9b10;
  color: #f4f7e6;
  font-size: 13px;
  font-weight: 700;
  line-height: 27px;
  text-align: center;
  letter-spacing: -1px;
}
.tab-title { margin-left: 14px; font-size: 23px; color: #111; }
.tab-close { margin-left: auto; margin-right: 24px; }
.tab-new { margin: 20px 0 0 21px; }

.toolbar {
  flex: none;
  height: 80px;
  display: flex;
  align-items: center;
  background: #f9f9f9;
}
.backbtn {
  width: 67px;
  height: 67px;
  margin-left: 6px;
  border: 2px solid #b4b4b4;
  border-radius: 50%;
  background: #fff;
  display: flex;
  align-items: center;
  justify-content: center;
}
.navbtn { width: 64px; display: flex; justify-content: center; align-items: center; }
.backbtn + .navbtn { margin-left: 2px; }
.urlbar {
  width: 1800px;
  height: 60px;
  margin-left: 234px;
  display: flex;
  align-items: center;
  padding: 0 10px 0 15px;
  background: #fff;
  border: 2px solid #bebebe;
  border-radius: 6px;
  box-shadow: 0 2px 4px rgba(0,0,0,.06);
  font-size: 29px;
  color: #737373;
}
.url-sep { width: 2px; height: 42px; margin-left: 17px; background: #dedede; }
.url-info { margin-left: 14px; }
.url-text { margin-left: 17px; padding-top: 1px; }
.url-text b { font-weight: 400; color: #0c0c0d; }
.url-dots { margin-left: auto; }
.url-pocket { margin-left: 24px; }
.url-star { margin-left: 23px; }
.tools-first { margin-left: 236px; }
.zbox {
  width: 32px;
  height: 32px;
  background: #3c4d9c;
  color: #fff;
  font-weight: 700;
  font-size: 27px;
  line-height: 32px;
  text-align: center;
}
.tool-sep { width: 2px; height: 68px; margin-left: 5px; background: #e0e0e0; }
.tool-menu { margin-left: 10px; }

.bookmarks {
  flex: none;
  height: 44px;
  padding: 0 0 0 25px;
  display: flex;
  align-items: center;
  background: #f9f9f9;
  font-size: 23.800px;
  color: #1c1c1c;
  border-bottom: 2px solid #e4e4e4;
  box-sizing: content-box;
}
.bm-label { margin-left: 9px; }
.bm-folder { margin-left: 26px; }
.bm-narrow { font-size: 23px; }

/* swagger header */
.swagger-bar { flex: none; height: 102px; background: #89bf04; }
.swagger-inner { width: 1920px; margin: 0 auto; display: flex; align-items: flex-start; }
.logo { width: 703px; margin-left: 3px; padding-top: 25px; display: flex; align-items: center; }
.logo-mark {
  width: 57px;
  height: 57px;
  border-radius: 50%;
  background: #547f00;
  color: #f0f5e0;
  font-size: 26px;
  font-weight: 700;
  line-height: 54px;
  text-align: center;
  letter-spacing: -2px;
}
.logo-word { margin-left: 20px; margin-top: -8px; font-size: 48px; font-weight: 700; color: #fff; }
.api-input {
  width: 824px;
  height: 59px;
  margin-top: 24px;
  padding-left: 9px;
  background: #fff;
  border: 2px solid #d8dccf;
  font-size: 30.700px;
  line-height: 54px;
  color: #000;
}
.explore {
  width: 138px;
  height: 52px;
  margin: 30px 0 0 232px;
  background: #547f00;
  border-radius: 8px;
  color: #fff;
  font-size: 28.400px;
  font-weight: 700;
  line-height: 48px;
  text-align: center;
}

/* api body */
.page {
  flex: 1;
  min-height: 0;
  background: linear-gradient(to top, #ececec 0, #fdfdfd 75px, #fff 90px);
}
.content { width: 1920px; margin: 0 auto; padding-top: 72px; }
.title { font-size: 49.500px; line-height: 60px; font-weight: 700; }
.subtitle { margin-top: 17px; font-size: 30px; line-height: 40px; color: #111; }

.resource { border-bottom: 2px solid #ddd; }
.title + .subtitle + .resource { margin-top: 73px; }
.resource:last-of-type { border-bottom: 0; }
.res-head { display: flex; justify-content: space-between; align-items: flex-start; padding: 18px 0 0 2px; height: 81px; }
.closed .res-head { height: 82px; }
.res-head h2 { font-size: 37.300px; line-height: 40px; font-weight: 700; }
.closed h2 { color: #999; }
.res-actions { display: flex; margin-top: 10px; padding-right: 21px; font-size: 26px; line-height: 34px; color: #555; }
.closed .res-actions { color: #999; }
.res-actions span { padding: 0 20px; border-left: 2px solid #ddd; }
.res-actions span:first-child { border-left: 0; }
.res-actions span:last-child { padding-right: 0; }

.ops { display: flex; flex-direction: column; gap: 20px; padding-bottom: 20px; }
.op { height: 61px; display: flex; align-items: stretch; border: 2px solid; font-size: 26px; }
.verb {
  width: 100px;
  border-radius: 4px;
  color: #fff;
  font-size: 22px;
  line-height: 60px;
  text-align: center;
}
.path { margin-left: 29px; font-size: 31.600px; line-height: 55px; color: #000; }
.desc { margin-left: auto; padding-right: 20px; line-height: 55px; }
.get { background: #e7f0f7; border-color: #c3d9ec; }
.get .verb { background: #0f6ab4; }
.get .desc { color: #0f6ab4; }
.post { background: #e7f6ec; border-color: #c3e8d1; }
.post .verb { background: #10a54a; }
.post .desc { color: #10a54a; }
.delete { background: #f5e8e8; border-color: #e8c6c7; }
.delete .verb { background: #a41e22; }
.delete .desc { color: #a41e22; }
.put { background: #f9f2e9; border-color: #f0e0ca; }
.put .verb { background: #c5862b; }
.put .desc { color: #c5862b; }

.api-footer { margin-top: 33px; font-size: 32px; line-height: 40px; color: #999; }
.api-footer small { font-size: 26.400px; }

/* dock */
.dockrow { flex: 1; padding: 0 84px; }
.dock {
  height: 100%;
  display: flex;
  padding: 13px 8px 0;
  background: #555e77;
  border-radius: 10px 10px 0 0;
}
.dock-item { width: 104.100px; flex: none; position: relative; }
.dot { width: 7px; height: 7px; margin: 0 auto; border-radius: 50%; background: #000; }
.dock-sep { width: 2px; flex: none; background: #20283a; }
.dock-sep.short { height: 64px; margin: 6px 22px 0 22px; }
.dock-sep.tall { height: 96px; margin: 3px 23px 0 23px; }
.petals { isolation: isolate; }
.petals ellipse { mix-blend-mode: multiply; }
.dk-nov { font-size: 15px; fill: #fff; text-anchor: middle; font-family: "Liberation Sans", sans-serif; }
.dk-day { font-size: 40px; fill: #1a1a1a; text-anchor: middle; font-family: "Liberation Sans", sans-serif; }
.dk-3d { font-size: 15px; fill: #333; text-anchor: middle; font-family: "Liberation Sans", sans-serif; }
.dk-pages { font-size: 12px; fill: #fff; font-family: "Liberation Sans", sans-serif; }
.dk-key { font-size: 4px; font-weight: 700; fill: #555; font-family: "Liberation Sans", sans-serif; }
.dk-badge { font-size: 21px; fill: #fff; text-anchor: middle; font-family: "Liberation Sans", sans-serif; }
.dk-term { font-size: 24px; font-weight: 700; fill: #fff; font-family: "Liberation Mono", monospace; }
.dk-pdf { font-size: 14px; fill: #777; text-anchor: middle; font-family: "Liberation Sans", sans-serif; }
```
